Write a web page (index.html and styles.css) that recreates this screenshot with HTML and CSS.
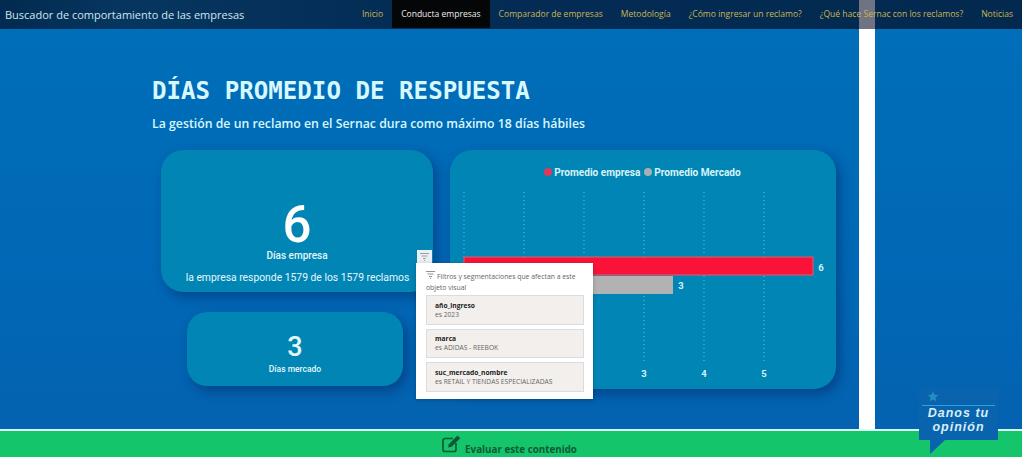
FILE: index.html
```html
<!DOCTYPE html>
<html lang="es">
<head>
<meta charset="utf-8">
<title>Días promedio de respuesta</title>
<link rel="stylesheet" href="styles.css">
</head>
<body>
<header class="topbar">
  <div class="brand">Buscador de comportamiento de las empresas</div>
  <nav class="nav">
    <a class="nav-item">Inicio</a>
    <a class="nav-item is-active">Conducta empresas</a>
    <a class="nav-item">Comparador de empresas</a>
    <a class="nav-item">Metodología</a>
    <a class="nav-item">¿Cómo ingresar un reclamo?</a>
    <a class="nav-item">¿Qué hace Sernac con los reclamos?</a>
    <a class="nav-item">Noticias</a>
  </nav>
  <span class="strip-top"></span>
</header>
<main class="report">
  <span class="strip"></span>
  <h1 class="title">DÍAS PROMEDIO DE RESPUESTA</h1>
  <p class="subtitle">La gestión de un reclamo en el Sernac dura como máximo 18 días hábiles</p>
  <div class="visuals">
    <div class="left-col">
      <section class="card card-main">
        <div class="big-num">6</div>
        <div class="kpi-label">Días empresa</div>
        <div class="kpi-note">la empresa responde 1579 de los 1579 reclamos</div>
      </section>
      <section class="card card-market">
        <div class="mid-num">3</div>
        <div class="kpi-label-small">Días mercado</div>
      </section>
    </div>
    <section class="card card-chart">
      <div class="legend">
        <span class="dot dot-red"></span><span class="legend-text">Promedio empresa</span>
        <span class="dot dot-gray"></span><span class="legend-text">Promedio Mercado</span>
      </div>
      <svg class="plot" width="386" height="204" viewBox="0 0 386 204">
        <g class="grid">
          <line x1="14" y1="8" x2="14" y2="180"/>
          <line x1="74" y1="8" x2="74" y2="180"/>
          <line x1="134" y1="8" x2="134" y2="180"/>
          <line x1="194" y1="8" x2="194" y2="180"/>
          <line x1="254" y1="8" x2="254" y2="180"/>
          <line x1="314" y1="8" x2="314" y2="180"/>
        </g>
        <rect class="bar-red" x="14" y="73" width="349" height="18"/>
        <rect class="bar-gray" x="14" y="92" width="209" height="18"/>
        <text class="val" x="371" y="87">6</text>
        <text class="val" x="231" y="105">3</text>
        <text class="val" x="194" y="193">3</text>
        <text class="val" x="254" y="193">4</text>
        <text class="val" x="314" y="193">5</text>
      </svg>
    </section>
  </div>

  <div class="filter-tab">
    <svg width="9" height="8" viewBox="0 0 9 8"><path d="M0 .5h9M1.5 3h6M3 5.5h3M4 7.5h1" stroke="#8a8a8a" stroke-width=".8" fill="none"/></svg>
  </div>
  <aside class="popup">
    <p class="popup-head"><svg class="popup-icon" width="9" height="8" viewBox="0 0 9 8"><path d="M0 .5h9M1.5 3h6M3 5.5h3M4 7.5h1" stroke="#777" stroke-width=".8" fill="none"/></svg>Filtros y segmentaciones que afectan a este objeto visual</p>
    <div class="filter"><b>año_ingreso</b><span>es 2023</span></div>
    <div class="filter"><b>marca</b><span>es ADIDAS - REEBOK</span></div>
    <div class="filter"><b>suc_mercado_nombre</b><span>es RETAIL Y TIENDAS ESPECIALIZADAS</span></div>
  </aside>
</main>
<footer class="footer">
  <svg class="edit-icon" width="20" height="19" viewBox="0 0 20 19">
    <path d="M14 9v6.5a2 2 0 0 1-2 2H3a2 2 0 0 1-2-2V6.500a2 2 0 0 1 2-2h8" fill="none" stroke="#0f5a34" stroke-width="1.700"/>
    <path d="M6 13.500l.8-3.300L15.500 1.500l2.800 2.800-8.700 8.500z" fill="#0f5a34"/>
  </svg>
  <span class="footer-text">Evaluar este contenido</span>
</footer>
<div class="badge">
  <svg class="star" width="12" height="11" viewBox="0 0 12 11"><path d="M6 0l1.500 3.800 4 .3-3.100 2.500 1 3.900L6 8.400l-3.400 2.100 1-3.900L.5 4.100l4-.3z" fill="#1f8fc4"/></svg>
  <div class="badge-text">Danos tu<br>opinión</div>
</div>
</body>
</html>
```
FILE: styles.css
```css
* { box-sizing: border-box; }
html, body { height: 100%; }
body {
  margin: 0;
  height: 457px;
  width: 1022px;
  overflow: hidden;
  display: flex;
  flex-direction: column;
  position: relative;
  background: #0068b6;
  font-family: "Open Sans", sans-serif;
}

/* top bar */
.topbar {
  position: relative;
  flex: 0 0 29px;
  display: flex;
  justify-content: space-between;
  padding-left: 5px;
  background: linear-gradient(90deg, #032a50 0%, #06365f 12%, #042c55 40%, #03294f 100%);
}
.brand {
  font-family: "Open Sans", sans-serif;
  font-size: 11px;
  line-height: 29px;
  color: #cfe6ee;
}
.nav { display: flex; }
.nav-item {
  position: relative;
  z-index: 1;
  display: block;
  padding: 0 9px;
  font-size: 8.560px;
  line-height: 29px;
  color: #cdb350;
  white-space: nowrap;
}
.nav-item.is-active { background: #050608; color: #eeeeee; height: 28px; }
.strip-top {
  position: absolute;
  left: 859px;
  top: 0;
  width: 16px;
  height: 29px;
  background: #6f7384;
}

/* report canvas */
.report {
  position: relative;
  flex: 1;
  padding: 44px 0 0 152px;
  background: linear-gradient(180deg, #006eb8 0%, #0068b6 60%, #0462b0 100%);
}
.strip {
  position: absolute;
  left: 859px;
  top: 0;
  bottom: 0;
  width: 16px;
  background: #fff;
}
.title {
  margin: 0;
  font-family: "DejaVu Sans Mono", monospace;
  font-weight: 700;
  font-size: 24.150px;
  line-height: 36px;
  color: #d8f8ff;
}
.subtitle {
  margin: 5px 0 0;
  font-family: "Open Sans", sans-serif;
  font-weight: 600;
  font-size: 12.300px;
  line-height: 20px;
  color: #d8f8ff;
}
.visuals {
  display: flex;
  gap: 17px;
  margin-top: 16px;
  margin-left: 9px;
}
.left-col {
  display: flex;
  flex-direction: column;
  align-items: center;
  width: 272px;
  gap: 20px;
}
.card {
  background: #0085b4;
  border-radius: 22px;
  box-shadow: 4px 5px 12px rgba(0, 30, 90, .45);
  color: #e4f8fb;
  text-align: center;
}
.card-main {
  width: 272px;
  height: 142px;
  padding-top: 52px;
}
.big-num {
  font-family: "Roboto", sans-serif;
  font-weight: 500;
  font-size: 51px;
  line-height: 46px;
  color: #fff;
}
.kpi-label {
  font-family: "Roboto", sans-serif;
  font-weight: 500;
  font-size: 10px;
  line-height: 14px;
  margin-top: 1px;
}
.kpi-note {
  font-family: "Roboto", sans-serif;
  font-size: 10.350px;
  line-height: 14px;
  margin-top: 8px;
  padding-left: 1px;
}
.card-market {
  width: 216px;
  height: 74px;
  margin-right: 4px;
  border-radius: 20px;
  padding-top: 20px;
}
.mid-num {
  font-family: "Roboto", sans-serif;
  font-weight: 500;
  font-size: 27px;
  line-height: 30px;
}
.kpi-label-small {
  font-family: "Roboto", sans-serif;
  font-weight: 500;
  font-size: 8.500px;
  line-height: 12px;
  margin-top: 1px;
}
.card-chart {
  width: 386px;
  height: 239px;
  padding-top: 15px;
}
.legend {
  display: flex;
  justify-content: center;
  align-items: center;
  height: 14px;
  margin-left: 3px;
  font-family: "Roboto", sans-serif;
  font-weight: 700;
  font-size: 10.100px;
  color: #d5f3f9;
}
.legend-text { margin-right: 4px; }
.dot { width: 8px; height: 8px; border-radius: 50%; margin-right: 2px; }
.dot-red { background: #e0375f; }
.dot-gray { background: #a5b1b5; }
.plot { display: block; margin-top: 5px; }
.grid line {
  stroke: #6fc6dc;
  stroke-width: 1;
  stroke-dasharray: 1 3;
}
.bar-red { fill: #fb1238; stroke: #b85a72; stroke-width: 1.500; }
.bar-gray { fill: #b2b2b2; }
.val {
  font-family: "Roboto", sans-serif;
  font-weight: 700;
  font-size: 9.500px;
  fill: #d5f3f9;
  text-anchor: middle;
}

/* filter popup */
.filter-tab {
  position: absolute;
  left: 417px;
  top: 221px;
  width: 15px;
  height: 14px;
  background: #e9f1f4;
  display: flex;
  justify-content: center;
  padding-top: 3px;
}
.popup {
  position: absolute;
  left: 416px;
  top: 234px;
  width: 177px;
  height: 136px;
  background: #fff;
  padding: 8px 9px 0 10px;
  box-shadow: 0 1px 4px rgba(0, 0, 0, .25);
}
.popup-head {
  margin: 0 0 4px;
  font-family: "Open Sans", sans-serif;
  font-size: 6.850px;
  line-height: 11px;
  height: 20px;
  color: #666;
}
.popup-icon { margin-right: 2px; }
.filter {
  display: flex;
  flex-direction: column;
  justify-content: center;
  height: 29.500px;
  margin-bottom: 4px;
  padding-left: 8px;
  background: #f3efec;
  border: 1px solid #dcdcdc;
  font-family: "Open Sans", sans-serif;
  font-size: 6.700px;
  line-height: 9px;
  color: #666;
}
.filter b { color: #222; font-weight: 700; }

/* footer */
.footer {
  flex: 0 0 28px;
  display: flex;
  justify-content: center;
  align-items: center;
  gap: 3px;
  padding-right: 3px;
  background: #14c56b;
  border-top: 2px solid #d8fff0;
}
.edit-icon { margin-top: -2px; }
.footer-text {
  font-family: "Open Sans", sans-serif;
  font-weight: 700;
  font-size: 9.800px;
  color: #0f5a34;
  padding-top: 11px;
  line-height: 14px;
}

/* opinion badge */
.badge {
  position: absolute;
  left: 919px;
  top: 387px;
  width: 79px;
  height: 53px;
  background: #0a63ad;
}
.badge::after {
  content: "";
  position: absolute;
  left: 11px;
  top: 53px;
  border-style: solid;
  border-width: 14px 15px 0 0;
  border-color: #0a63ad transparent transparent transparent;
}
.star { position: absolute; left: 8px; top: 4px; }
.badge-text {
  position: absolute;
  left: 3px;
  right: 3px;
  top: 18px;
  border-top: 1.500px solid #2f9fe0;
  font-family: "Liberation Sans", sans-serif;
  font-weight: 700;
  font-style: italic;
  font-size: 12.500px;
  line-height: 14px;
  letter-spacing: 1px;
  text-align: center;
  color: #d8eef8;
}
```
